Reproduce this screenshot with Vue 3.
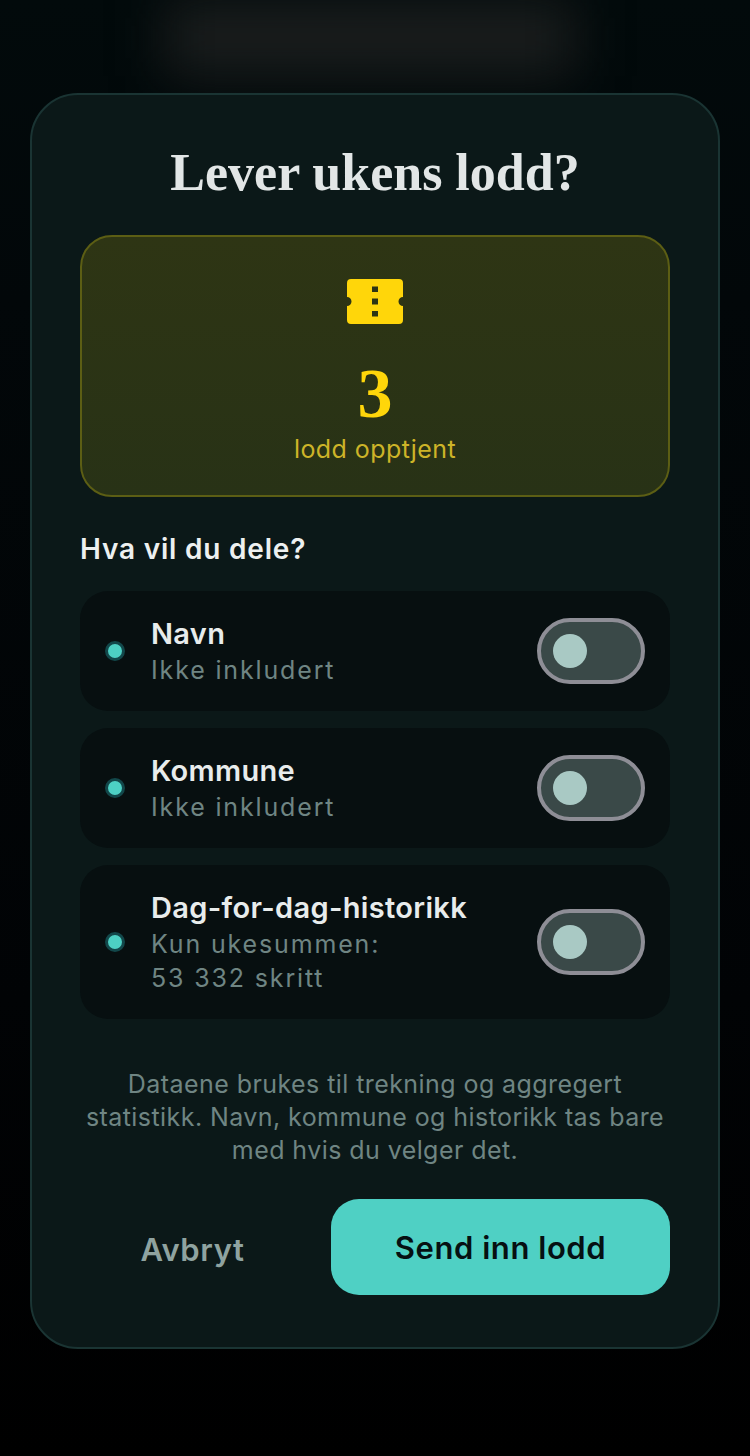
<script setup>
const rows = [
  { title: 'Navn', sub: ['Ikke inkludert'] },
  { title: 'Kommune', sub: ['Ikke inkludert'] },
  { title: 'Dag-for-dag-historikk', sub: ['Kun ukesummen:', '53 332 skritt'] }
]
</script>

<template>
  <div class="page">
    <div class="glow"></div>
    <section class="card">
      <h1 class="title">Lever ukens lodd?</h1>
      <div class="earned">
        <svg class="ticket" width="56" height="45" viewBox="0 0 56 45" aria-hidden="true">
          <path fill="#ffd60a" fill-rule="evenodd" d="M4 0H52a4 4 0 0 1 4 4V18a4.500 4.500 0 0 0 0 9V41a4 4 0 0 1-4 4H4a4 4 0 0 1-4-4V27a4.500 4.500 0 0 0 0-9V4a4 4 0 0 1 4-4ZM25 7.500v5.500h6V7.500ZM25 19.500v6h6v-6ZM25 32v5.500h6V32Z"/>
        </svg>
        <div class="count">3</div>
        <div class="earned-label">lodd opptjent</div>
      </div>
      <h2 class="question">Hva vil du dele?</h2>
      <div class="rows">
        <div v-for="row in rows" :key="row.title" class="row">
          <span class="dot"></span>
          <div class="row-text">
            <div class="row-title">{{ row.title }}</div>
            <div v-for="line in row.sub" :key="line" class="row-sub">{{ line }}</div>
          </div>
          <span class="switch"><span class="knob"></span></span>
        </div>
      </div>
      <p class="note">Dataene brukes til trekning og aggregert statistikk. Navn, kommune og historikk tas bare med hvis du velger det.</p>
      <div class="actions">
        <button class="cancel">Avbryt</button>
        <button class="send">Send inn lodd</button>
      </div>
    </section>
  </div>
</template>

<style>
html, body { margin: 0; background: #000; }
</style>

<style scoped>
.page {
  position: relative;
  width: 750px;
  height: 1456px;
  box-sizing: border-box;
  padding: 93px 30px 0;
  overflow: hidden;
  background: linear-gradient(180deg, #020a0b 0, #020709 300px, #010305 1000px, #000 1456px);
  font-family: Inter, "Noto Sans", sans-serif;
}
.glow {
  position: absolute;
  left: 165px;
  top: 0;
  width: 410px;
  height: 76px;
  background: #1a1d1d;
  filter: blur(26px);
}
.card {
  position: relative;
  box-sizing: border-box;
  height: 1256px;
  padding: 48px 48px 0;
  border: 2px solid #1a3433;
  border-radius: 48px;
  background: #0b1818;
}
.title {
  margin: 0;
  height: 62px;
  font: 700 52px/60px "Liberation Serif", serif;
  color: #e2e6e6;
  text-align: center;
}
.earned {
  box-sizing: border-box;
  height: 262px;
  margin-top: 30px;
  padding-top: 42px;
  border: 2px solid #5c5e14;
  border-radius: 32px;
  background: linear-gradient(180deg, #2e3514, #283216);
  text-align: center;
}
.ticket { display: block; margin: 0 auto; }
.count {
  margin-top: 42px;
  height: 56px;
  font: 700 70px/56px "Liberation Serif", serif;
  color: #ffd60a;
}
.earned-label {
  margin-top: 11px;
  font-size: 25px;
  line-height: 32px;
  letter-spacing: 0.45px;
  color: #cdb428;
}
.question {
  margin: 34px 0 0;
  font-size: 28px;
  line-height: 36px;
  font-weight: 600;
  letter-spacing: 0.8px;
  color: #edf0f0;
}
.rows {
  display: flex;
  flex-direction: column;
  gap: 17px;
  margin-top: 24px;
}
.row {
  display: flex;
  align-items: center;
  box-sizing: border-box;
  padding: 0 25px;
  border-radius: 28px;
  background: #070f10;
}
.dot {
  flex: none;
  box-sizing: content-box;
  width: 14px;
  height: 14px;
  border: 3px solid #12474a;
  border-radius: 50%;
  background: #4dd0c4;
}
.row-text { flex: 1; margin-left: 26px; padding: 24px 0 23.5px; }
.row-title {
  margin-bottom: 2px;
  font-size: 29px;
  line-height: 37px;
  font-weight: 600;
  letter-spacing: 0.33px;
  color: #e8ecec;
}
.row-sub {
  font-size: 25px;
  line-height: 33.5px;
  letter-spacing: 1.85px;
  color: #6f8583;
}
.switch {
  flex: none;
  box-sizing: border-box;
  display: flex;
  align-items: center;
  width: 108px;
  height: 66px;
  padding-left: 12px;
  border: 4px solid #8e8e96;
  border-radius: 33px;
  background: #3a4948;
}
.knob {
  width: 34px;
  height: 34px;
  border-radius: 50%;
  background: #a9c9c4;
}
.note {
  margin: 49.5px 0 0;
  font-size: 25px;
  line-height: 33px;
  letter-spacing: 0.43px;
  color: #6f8583;
  text-align: center;
}
.actions {
  display: flex;
  align-items: center;
  gap: 26px;
  margin-top: 32px;
}
.cancel, .send {
  border: 0;
  padding: 0;
  font-family: inherit;
  font-size: 31px;
  font-weight: 600;
}
.cancel {
  width: 225px;
  height: 96px;
  padding-top: 4px;
  background: none;
  letter-spacing: 0.6px;
  color: #8fa3a0;
}
.send {
  flex: 1;
  height: 96px;
  border-radius: 28px;
  background: #4fd0c4;
  letter-spacing: 0.55px;
  color: #061012;
}
</style>
